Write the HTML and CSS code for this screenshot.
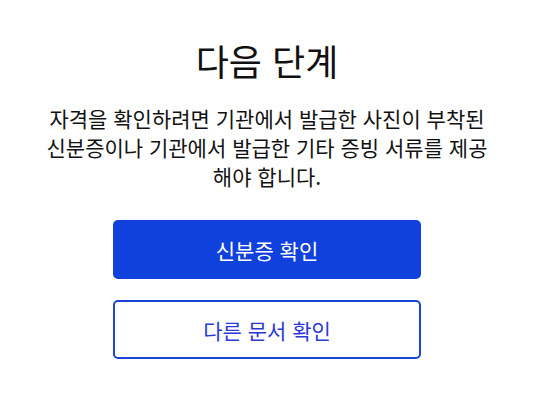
FILE: index.html
```html
<!DOCTYPE html>
<html lang="ko">
<head>
    <meta charset="UTF-8">
    <meta name="viewport" content="width=device-width, initial-scale=1.0">
    <title>다음 단계</title>
    <link rel="stylesheet" href="styles.css">
</head>
<body>

<div class="container">
    <h1 class="title">다음 단계</h1>
    <p class="description">자격을 확인하려면 기관에서 발급한 사진이 부착된 신분증이나 기관에서 발급한 기타 증빙 서류를 제공해야 합니다.</p>
    <div class="actions">
        <button class="btn btn-primary">신분증 확인</button>
        <button class="btn btn-outline">다른 문서 확인</button>
    </div>
</div>

</body>
</html>
```

FILE: styles.css
```css
body {
    font-family: "Noto Sans CJK KR", "Noto Sans", sans-serif;
    margin: 0;
    padding-right: 3px;
    background: #fff;
    color: #111;
}
.container {
    width: 456px;
    margin: 0 auto;
    padding-top: 36px;
    text-align: center;
}
.title {
    margin: 0;
    font-size: 36px;
    font-weight: 400;
    line-height: 48px;
}
.description {
    margin: 20px 0 0;
    font-size: 21px;
    line-height: 29px;
}
.actions {
    display: flex;
    flex-direction: column;
    align-items: center;
    gap: 21px;
    margin-top: 29px;
}
.btn {
    width: 308px;
    height: 59px;
    border-radius: 5px;
    font-family: inherit;
    font-size: 21px;
    cursor: pointer;
}
.btn-primary {
    border: none;
    background: #1141dc;
    color: #fff;
}
.btn-outline {
    border: 2px solid #1a44d8;
    background: #fff;
    color: #2b3ad6;
}
```
